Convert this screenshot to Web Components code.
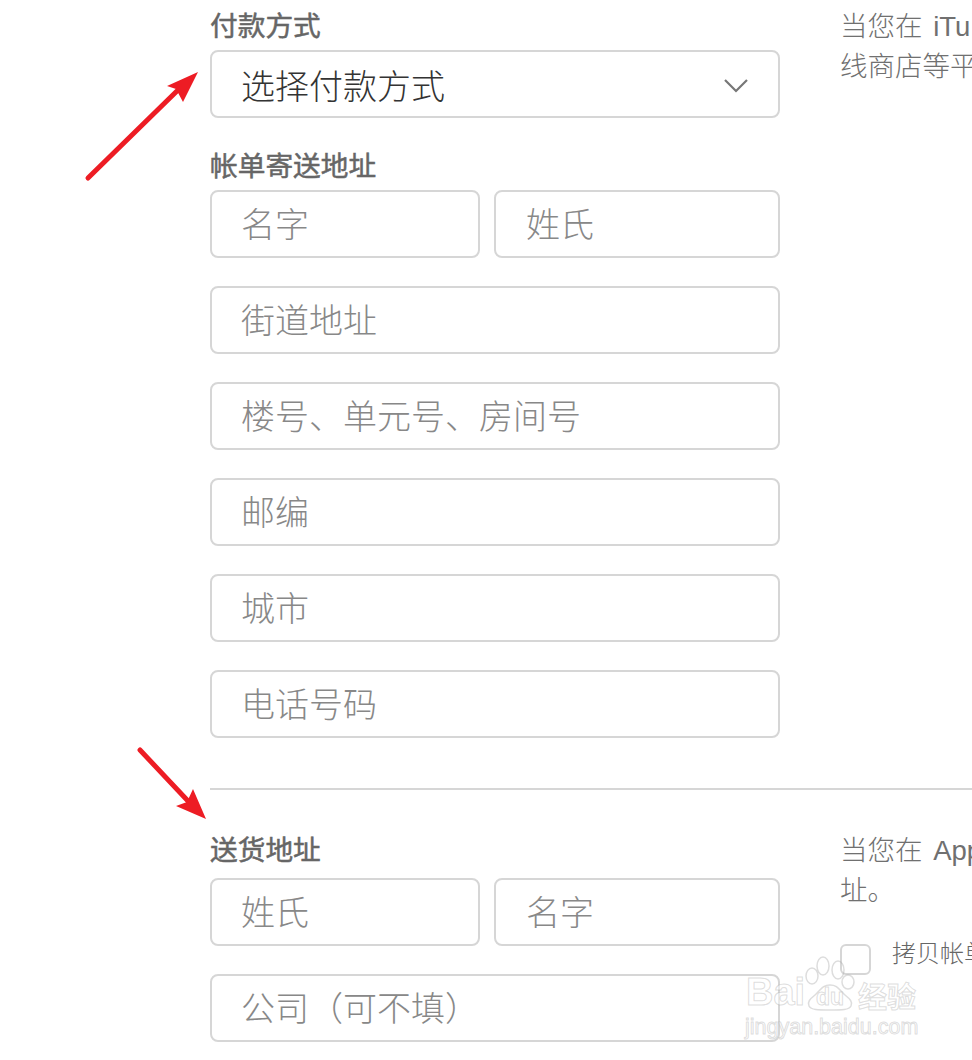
<!DOCTYPE html>
<html lang="zh">
<head>
<meta charset="utf-8">
<title>付款方式</title>
<style>
  html, body { margin: 0; padding: 0; background: #fff; overflow: hidden; height: 1060px; }
  body { font-family: "Liberation Sans", "Noto Sans CJK SC", sans-serif; }
</style>
</head>
<body>
<form-page>
  <form-section>
    <form-label>付款方式</form-label>
    <select-box>选择付款方式</select-box>
    <form-label>帐单寄送地址</form-label>
    <field-row><text-field narrow>名字</text-field><text-field grow>姓氏</text-field></field-row>
    <text-field>街道地址</text-field>
    <text-field>楼号、单元号、房间号</text-field>
    <text-field>邮编</text-field>
    <text-field>城市</text-field>
    <text-field>电话号码</text-field>
    <side-note slot="side">当您在 iTu<br>线商店等平</side-note>
  </form-section>
  <form-section divided>
    <form-label gap>送货地址</form-label>
    <field-row><text-field narrow>姓氏</text-field><text-field grow>名字</text-field></field-row>
    <text-field>公司（可不填）</text-field>
    <side-note slot="side">当您在 App<br>址。</side-note>
    <check-line slot="side">拷贝帐单</check-line>
  </form-section>
</form-page>
<red-arrows></red-arrows>
<baidu-mark></baidu-mark>

<script>
// small helper, every element gets its own shadow root
function shadow(el, html) {
  el.attachShadow({ mode: 'open' });
  el.shadowRoot.innerHTML = html;
}

class FormPage extends HTMLElement {
  constructor() {
    super();
    shadow(this, `
      <style>
        :host { display: block; width: 972px; height: 1060px; overflow: hidden; padding: 10px 0 0 210px; box-sizing: border-box; }
      </style>
      <slot></slot>`);
  }
}

class FormSection extends HTMLElement {
  constructor() {
    super();
    shadow(this, `
      <style>
        :host { display: grid; grid-template-columns: 570px 162px; column-gap: 60px; }
        :host([divided]) { border-top: 2px solid #d6d6d6; margin-top: 22px; padding-top: 44px; }
        .main { display: flex; flex-direction: column; min-width: 0; }
        .side { margin-top: -3px; min-width: 0; }
      </style>
      <div class="main"><slot></slot></div>
      <div class="side"><slot name="side"></slot></div>`);
  }
}

class FormLabel extends HTMLElement {
  constructor() {
    super();
    shadow(this, `
      <style>
        :host { display: block; height: 40px; font-size: 27.7px; line-height: 34px; font-weight: 400; -webkit-text-stroke: .5px #666; color: #666; white-space: nowrap; }
        :host([gap]) { margin-bottom: 4px; }
      </style>
      <slot></slot>`);
  }
}

class TextField extends HTMLElement {
  constructor() {
    super();
    shadow(this, `
      <style>
        :host { display: flex; align-items: center; flex: none; box-sizing: border-box; height: 68px; margin-bottom: 28px; padding: 0 0 4px 29px; border: 2px solid #d6d6d6; border-radius: 8px; background: #fff; font-size: 34px; font-weight: 300; color: #888; white-space: nowrap; }
        :host([narrow]) { flex: 0 0 270px; }
        :host([grow]) { flex: 1 1 0; padding-left: 30px; }
      </style>
      <slot></slot>`);
  }
}

class FieldRow extends HTMLElement {
  constructor() {
    super();
    shadow(this, `
      <style>
        :host { display: flex; gap: 14px; }
      </style>
      <slot></slot>`);
  }
}

class SelectBox extends HTMLElement {
  constructor() {
    super();
    shadow(this, `
      <style>
        :host { display: flex; align-items: center; justify-content: space-between; box-sizing: border-box; height: 68px; margin-bottom: 32px; padding: 0 29px; border: 2px solid #d6d6d6; border-radius: 8px; font-size: 34px; font-weight: 300; color: #333; white-space: nowrap; }
        svg { display: block; margin-top: 1px; }
      </style>
      <slot></slot>
      <svg width="26" height="16" viewBox="0 0 26 16" fill="none" stroke="#777" stroke-width="2.2"><path d="M2 3l11 11L24 3"/></svg>`);
  }
}

class SideNote extends HTMLElement {
  constructor() {
    super();
    shadow(this, `
      <style>
        :host { display: block; font-size: 27.5px; font-weight: 300; line-height: 40px; word-spacing: 3px; color: #707070; white-space: nowrap; }
      </style>
      <slot></slot>`);
  }
}

class CheckLine extends HTMLElement {
  constructor() {
    super();
    shadow(this, `
      <style>
        :host { display: flex; align-items: flex-start; gap: 21px; margin-top: 29px; font-size: 24px; font-weight: 300; line-height: 28px; color: #666; white-space: nowrap; }
        i { display: block; flex: none; box-sizing: border-box; width: 31px; height: 31px; margin-top: 4px; border: 2px solid #d6d6d6; border-radius: 6px; }
      </style>
      <i></i><span><slot></slot></span>`);
  }
}

class RedArrows extends HTMLElement {
  constructor() {
    super();
    shadow(this, `
      <style>
        :host { position: absolute; left: 0; top: 0; width: 972px; height: 1060px; pointer-events: none; }
        svg { display: block; }
      </style>
      <svg width="972" height="1060" viewBox="0 0 972 1060">
        <g stroke="#ed1c24" stroke-width="5" stroke-linecap="round" fill="none">
          <path d="M88 178L178 90"/>
          <path d="M140 750L188 801"/>
        </g>
        <g fill="#ed1c24">
          <path d="M198 72L167 86L176 89L183 102Z"/>
          <path d="M206 819L176 806L187 802L193 789Z"/>
        </g>
      </svg>`);
  }
}

class BaiduMark extends HTMLElement {
  constructor() {
    super();
    shadow(this, `
      <style>
        :host { position: absolute; left: 740px; top: 945px; width: 232px; height: 100px; pointer-events: none; color: rgba(255,255,255,.5); -webkit-text-stroke: 1px rgba(170,170,170,.4); font-family: "Liberation Sans", sans-serif; }
        svg { position: absolute; left: 0; top: 0; }
        b, span { position: absolute; white-space: nowrap; font-weight: 700; }
        .bai { left: 6px; top: 27px; font-size: 38px; line-height: 40px; }
        .du { left: 76px; top: 38px; font-size: 23px; line-height: 28px; }
        .jy { left: 118px; top: 32px; font-size: 29px; line-height: 36px; font-family: "Noto Sans CJK SC", sans-serif; }
        .url { left: 5px; top: 69px; font-size: 21.5px; line-height: 26px; font-weight: 400; }
      </style>
      <svg width="232" height="100" viewBox="0 0 232 100" fill="none" stroke="rgba(170,170,170,.4)" stroke-width="1.5">
        <ellipse cx="72" cy="31" rx="6" ry="8"/>
        <ellipse cx="83" cy="21" rx="6" ry="9"/>
        <ellipse cx="98" cy="25" rx="6" ry="9"/>
        <ellipse cx="108" cy="37" rx="6" ry="7"/>
        <path d="M90 40c8 0 9 5 15 10c5 4 8 7 6 11c-2 4-9 4-21 4s-19 0-21-4c-2-4 1-7 6-11c6-5 7-10 15-10z"/>
      </svg>
      <b class="bai">Bai</b><b class="du">du</b><b class="jy">经验</b>
      <span class="url">jingyan.baidu.com</span>`);
  }
}

customElements.define('form-page', FormPage);
customElements.define('form-section', FormSection);
customElements.define('form-label', FormLabel);
customElements.define('text-field', TextField);
customElements.define('field-row', FieldRow);
customElements.define('select-box', SelectBox);
customElements.define('side-note', SideNote);
customElements.define('check-line', CheckLine);
customElements.define('red-arrows', RedArrows);
customElements.define('baidu-mark', BaiduMark);
</script>
</body>
</html>
